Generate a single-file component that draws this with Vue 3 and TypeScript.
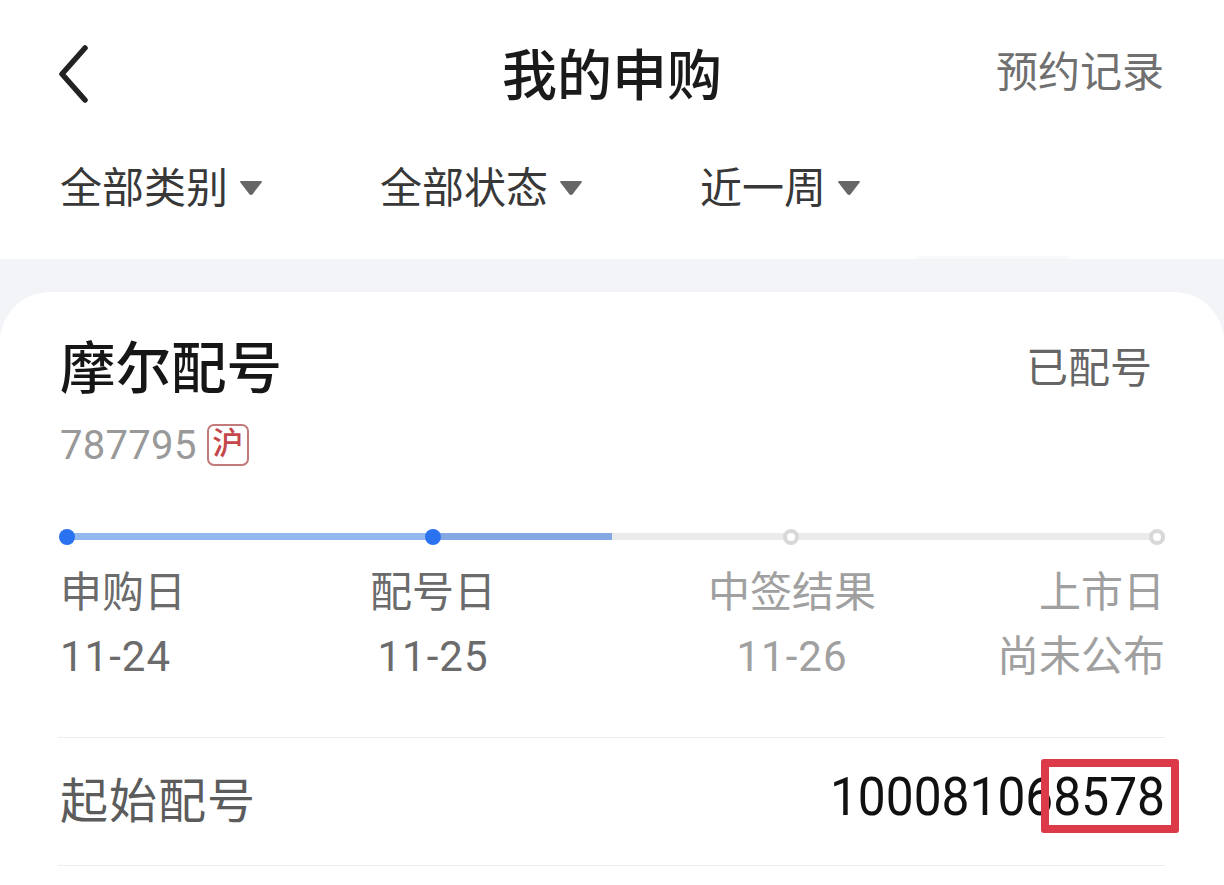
<script setup lang="ts">
const filters = ['全部类别', '全部状态', '近一周']

const steps = [
  { name: '申购日', date: '11-24', done: true },
  { name: '配号日', date: '11-25', done: true },
  { name: '中签结果', date: '11-26', done: false },
  { name: '上市日', date: '尚未公布', done: false },
]
</script>

<template>
  <div class="page">
    <header class="top">
      <div class="nav">
        <svg class="back" width="32" height="60" viewBox="0 0 32 60">
          <polyline points="26,3 3,29 26,55" fill="none" stroke="#222" stroke-width="5.500" stroke-linecap="round" stroke-linejoin="round" />
        </svg>
        <h1 class="title">我的申购</h1>
        <span class="record">预约记录</span>
      </div>
      <div class="filters">
        <div v-for="f in filters" :key="f" class="filter">
          <span>{{ f }}</span>
          <svg class="caret" width="24" height="16" viewBox="0 0 24 16">
            <path d="M2 1h20q1.500 0 .6 1.400l-9 11.800q-1.600 1.600-3.200 0l-9-11.800Q.5 1 2 1z" fill="#666" />
          </svg>
        </div>
      </div>
    </header>

    <section class="card">
      <div class="head">
        <h2 class="name">摩尔配号</h2>
        <span class="status">已配号</span>
      </div>
      <div class="code-row">
        <span class="code">787795</span>
        <span class="market">沪</span>
      </div>

      <div class="track">
        <div class="seg seg-a"></div>
        <div class="seg seg-b"></div>
        <div class="seg seg-c"></div>
        <i class="dot on d1"></i>
        <i class="dot on d2"></i>
        <i class="dot off d3"></i>
        <i class="dot off d4"></i>
      </div>

      <div class="steps">
        <div v-for="s in steps" :key="s.name" class="step" :class="{ done: s.done }">
          <div>{{ s.name }}</div>
          <div class="date">{{ s.date }}</div>
        </div>
      </div>

      <div class="row">
        <span class="row-label">起始配号</span>
        <span class="row-value"><span class="digits">100081068578</span><i class="mark"></i></span>
      </div>
    </section>
  </div>
</template>

<style scoped>
.page {
  height: 885px;
  overflow: hidden;
  background: #f2f4f8;
  font-family: Roboto, "Noto Sans CJK SC", sans-serif;
}

.top {
  position: relative;
  background: #fff;
  height: 259px;
  padding: 0 60px;
  box-sizing: border-box;
}

/* faint strip left over at the edge of the bar */
.top::after {
  content: "";
  position: absolute;
  left: 916px;
  bottom: 0;
  width: 153px;
  height: 3px;
  background: #f8f9fb;
}

.nav {
  height: 150px;
  display: flex;
  align-items: center;
  justify-content: space-between;
  position: relative;
}

.back {
  margin-left: -1px;
}

.title {
  position: absolute;
  left: 442px;
  top: 38px;
  margin: 0;
  font-size: 55px;
  line-height: 76px;
  font-weight: 500;
  color: #1a1a1a;
}

.record {
  font-size: 42px;
  color: #707070;
  margin-top: -14px;
}

.filters {
  display: flex;
  height: 68px;
  align-items: center;
}

.filter {
  display: flex;
  align-items: center;
  gap: 11px;
  width: 320px;
  font-size: 42px;
  color: #383838;
}

.caret {
  margin-top: 8px;
}

.card {
  margin-top: 33px;
  height: 600px;
  background: #fff;
  border-radius: 50px 50px 0 0;
  padding: 0 59px 0 60px;
}

.head {
  display: flex;
  justify-content: space-between;
  align-items: center;
  height: 90px;
  padding-top: 27px;
  padding-bottom: 5px;
  margin-bottom: -2px;
}

.name {
  margin: 0;
  font-size: 55.500px;
  font-weight: 500;
  color: #161616;
}

.status {
  font-size: 42px;
  color: #666;
  margin-right: 13px;
}

.code-row {
  display: flex;
  align-items: center;
  gap: 11px;
  height: 46px;
  margin-top: 10px;
}

.code {
  font-size: 40px;
  letter-spacing: .3px;
  color: #999;
}

.market {
  box-sizing: border-box;
  width: 42px;
  height: 42px;
  margin-left: -1px;
  border: 2px solid #c27a7a;
  border-radius: 7px;
  color: #c4474b;
  font-size: 31px;
  font-weight: 500;
  line-height: 36px;
  text-align: center;
}

.track {
  position: relative;
  display: flex;
  height: 7px;
  margin-top: 65px;
}

.seg-a { width: 373px; background: #93b8ef; }
.seg-b { width: 179px; background: #84a9e2; }
.seg-c { flex: 1; background: #ebebeb; }

.dot {
  position: absolute;
  top: 50%;
  box-sizing: border-box;
  width: 16px;
  height: 16px;
  margin: -8px 0 0 -8px;
  border-radius: 50%;
}

.dot.on { background: #2a72ef; }
.dot.off { background: #fff; border: 4px solid #d8d8d8; }
.d1 { left: 7px; }
.d2 { left: 373px; }
.d3 { left: 731px; }
.d4 { left: 1097px; }

.steps {
  display: flex;
  margin-top: 21px;
  font-size: 42px;
  line-height: 64px;
  color: #a0a0a0;
}

.step { text-align: center; }
.step.done { color: #6b6b6b; }
.step:nth-child(1) { width: 126px; text-align: left; }
.step:nth-child(2) { width: 126px; margin-left: 184px; }
.step:nth-child(3) { width: 168px; margin-left: 212px; }
.step:nth-child(4) { width: 168px; margin-left: 121px; text-align: right; }

.date {
  letter-spacing: 1px;
}

.step:last-child .date {
  letter-spacing: 0;
}

.row {
  display: flex;
  justify-content: space-between;
  align-items: center;
  margin-top: 48px;
  height: 129px;
  padding-bottom: 10px;
  box-sizing: border-box;
  border-top: 1px solid #ececec;
  border-bottom: 1px solid #ececec;
  margin-left: -2px;
}

.row-label {
  font-size: 48px;
  letter-spacing: 1px;
  color: #5c5c5c;
  margin-left: 2px;
}

.row-value {
  position: relative;
  font-size: 49.700px;
  color: #111;
}

.digits {
  display: inline-block;
  transform: scaleY(1.07);
}

.mark {
  position: absolute;
  right: -14px;
  top: -9px;
  width: 138px;
  height: 74px;
  box-sizing: border-box;
  border: 8px solid #dc3a48;
  border-radius: 3px;
}
</style>

<style>
html, body {
  margin: 0;
  overflow: hidden;
}
</style>
